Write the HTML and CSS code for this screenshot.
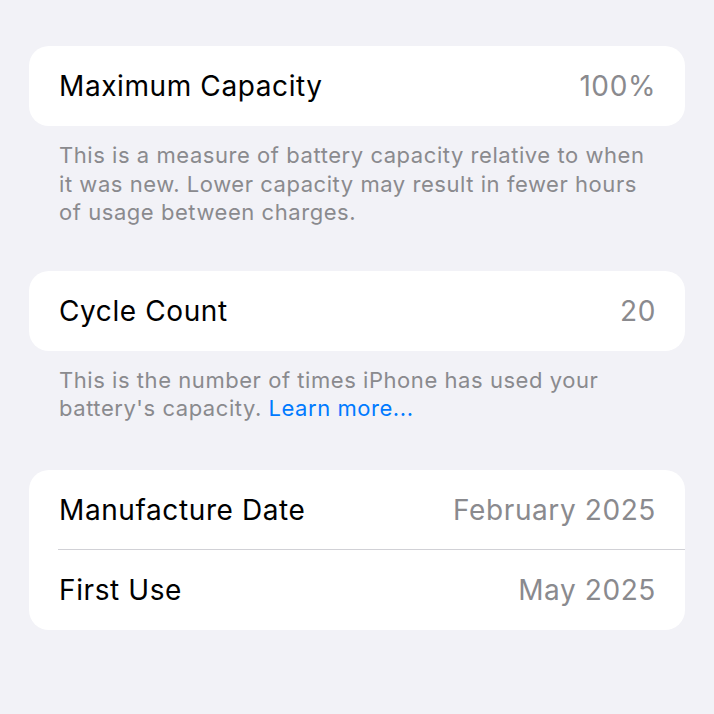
FILE: index.html
```html
<!DOCTYPE html>
<html lang="en">

<head>
    <meta charset="UTF-8">
    <meta name="viewport" content="width=device-width, initial-scale=1.0">
    <title>Battery Health</title>
    <link rel="stylesheet" href="styles.css">
</head>

<body>
    <div class="settings">
        <div class="group">
            <div class="row">
                <span class="label">Maximum Capacity</span>
                <span class="value">100%</span>
            </div>
        </div>
        <p class="footnote">This is a measure of battery capacity relative to when it was new. Lower capacity may result in fewer hours of usage between charges.</p>

        <div class="group">
            <div class="row">
                <span class="label">Cycle Count</span>
                <span class="value">20</span>
            </div>
        </div>
        <p class="footnote">This is the number of times iPhone has used your battery's capacity. <a href="#" class="link">Learn more...</a></p>

        <div class="group">
            <div class="row">
                <span class="label">Manufacture Date</span>
                <span class="value">February 2025</span>
            </div>
            <div class="row">
                <span class="label">First Use</span>
                <span class="value">May 2025</span>
            </div>
        </div>
    </div>
</body>

</html>
```

FILE: styles.css
```css
:root {
    --bg-color: #f2f2f7;
    --card-bg: #fff;
    --text-color: #000;
    --secondary: #8a8a8e;
    --separator: #d1d1d6;
    --link: #007aff;
}

body {
    font-family: Inter, "Noto Sans", sans-serif;
    margin: 0;
    background-color: var(--bg-color);
    color: var(--text-color);
}

.settings {
    padding: 46px 29px 0;
}

.group {
    background-color: var(--card-bg);
    border-radius: 20px;
    overflow: hidden;
}

.row {
    display: flex;
    justify-content: space-between;
    align-items: center;
    height: 80px;
    padding: 0 29px 0 30px;
    font-size: 28px;
    letter-spacing: 0.6px;
    position: relative;
}

.row + .row::before {
    content: "";
    position: absolute;
    top: -1px;
    left: 29px;
    right: 0;
    border-top: 1px solid var(--separator);
}

.value {
    color: var(--secondary);
}

.footnote {
    margin: 0 0 44px;
    padding: 15px 30px 0;
    font-size: 22px;
    line-height: 28.5px;
    letter-spacing: 0.55px;
    color: var(--secondary);
}

.footnote:last-of-type {
    margin-bottom: 47px;
}

.link {
    color: var(--link);
    text-decoration: none;
}
```
